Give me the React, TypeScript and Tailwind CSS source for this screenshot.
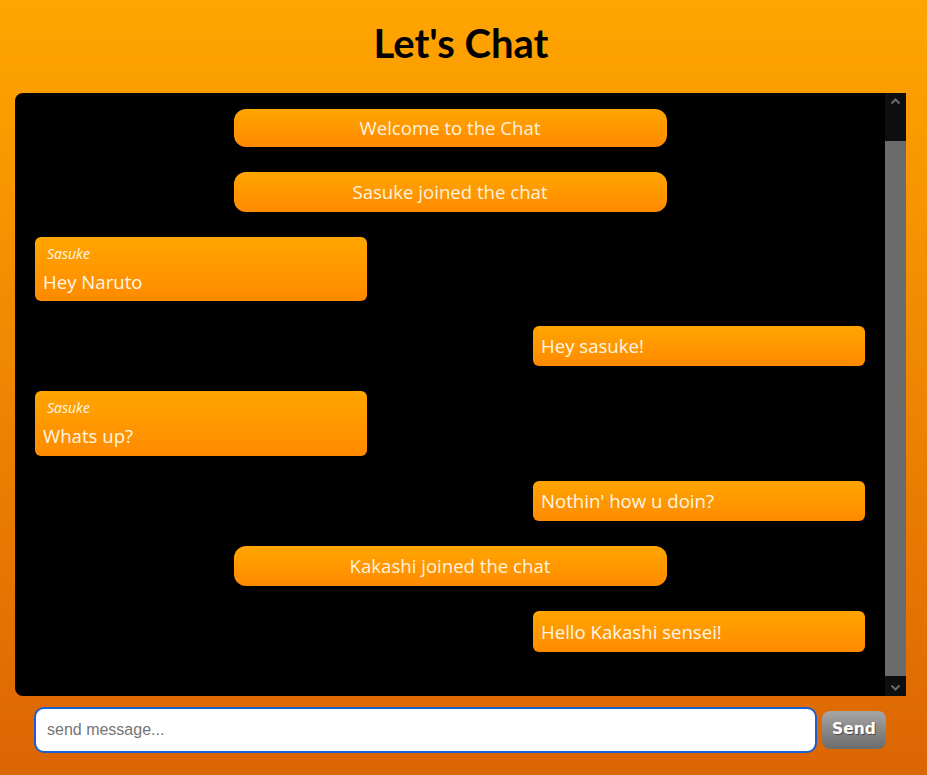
import { useState } from 'react';

type Message = {
    id: number;
    tipo: 'sistema' | 'recebida' | 'enviada';
    autor?: string;
    texto: string;
    altura: string;
};

const mensagens: Message[] = [
    { id: 1, tipo: 'sistema', texto: 'Welcome to the Chat', altura: 'h-[38px]' },
    { id: 2, tipo: 'sistema', texto: 'Sasuke joined the chat', altura: 'h-[40px]' },
    { id: 3, tipo: 'recebida', autor: 'Sasuke', texto: 'Hey Naruto', altura: 'h-[64px]' },
    { id: 4, tipo: 'enviada', texto: 'Hey sasuke!', altura: 'h-[40px]' },
    { id: 5, tipo: 'recebida', autor: 'Sasuke', texto: 'Whats up?', altura: 'h-[65px]' },
    { id: 6, tipo: 'enviada', texto: "Nothin' how u doin?", altura: 'h-[40px]' },
    { id: 7, tipo: 'sistema', texto: 'Kakashi joined the chat', altura: 'h-[40px]' },
    { id: 8, tipo: 'enviada', texto: 'Hello Kakashi sensei!', altura: 'h-[41px]' },
];

function Bolha({ msg }: { msg: Message }) {
    if (msg.tipo === 'sistema') {
        return (
            <div className="flex justify-center">
                <div className={`${msg.altura} w-[433px] rounded-[12px] bg-gradient-to-b from-[#ffa500] to-[#ff8a00] flex items-center justify-center text-[18.6px] text-[#fff2dc]`}>
                    {msg.texto}
                </div>
            </div>
        );
    }

    if (msg.tipo === 'recebida') {
        return (
            <div className="flex justify-start">
                <div className={`${msg.altura} w-[332px] rounded-[6px] bg-gradient-to-b from-[#ffa500] to-[#ff8a00] flex flex-col px-[8px] pt-[8px] text-[#fff6e6]`}>
                    <span className="italic text-[14px] leading-[18px] pl-[4px]">{msg.autor}</span>
                    <span className="text-[18.6px] leading-[26px] mt-[6px]">{msg.texto}</span>
                </div>
            </div>
        );
    }

    return (
        <div className="flex justify-end">
            <div className={`${msg.altura} w-[332px] rounded-[6px] bg-gradient-to-b from-[#ffa500] to-[#ff8a00] flex items-center px-[8px] text-[18.6px] text-[#fff6e6]`}>
                {msg.texto}
            </div>
        </div>
    );
}

function BarraRolagem() {
    return (
        <div className="w-[21px] flex flex-col bg-[#0e0e10]">
            <div className="h-[17px] flex items-center justify-center">
                <svg width="11" height="7" viewBox="0 0 11 7">
                    <path d="M1.5 5.5 L5.5 1.5 L9.5 5.5" stroke="#6a6a6e" strokeWidth="2" fill="none" />
                </svg>
            </div>
            <div className="h-[31px]" />
            <div className="flex-1 bg-[#6b6b6b]" />
            <div className="h-[2px]" />
            <div className="h-[18px] flex items-center justify-center">
                <svg width="11" height="7" viewBox="0 0 11 7">
                    <path d="M1.5 1.5 L5.5 5.5 L9.5 1.5" stroke="#6a6a6e" strokeWidth="2" fill="none" />
                </svg>
            </div>
        </div>
    );
}

function App() {
    const [texto, setTexto] = useState<string>('');

    return (
        <div className="w-full h-[775px] flex flex-col bg-gradient-to-b from-[#ffa500] to-[#dc6503] font-['Open_Sans',sans-serif]">
            <div className="h-[93px] flex items-center justify-center pb-[8px] pr-[5px]">
                <h1 className="text-[40px] font-bold text-black font-['Lato',sans-serif] leading-none">Let's Chat</h1>
            </div>

            <div className="ml-[15px] w-[891px] h-[603px] flex bg-black rounded-l-[8px] overflow-hidden">
                <div className="flex-1 flex flex-col gap-[25px] px-[20px] pt-[16px]">
                    {mensagens.map((msg) => (
                        <Bolha key={msg.id} msg={msg} />
                    ))}
                </div>
                <BarraRolagem />
            </div>

            <form className="flex items-center gap-[5px] pl-[34px] mt-[11px]" onSubmit={(e) => e.preventDefault()}>
                <input
                    value={texto}
                    onChange={(e) => setTexto(e.target.value)}
                    type="text"
                    placeholder="send message..."
                    autoFocus
                    className="w-[783px] h-[46px] bg-white rounded-[10px] border-2 border-[#1a5fd6] outline-none px-[11px] text-[16px] font-['Liberation_Sans',sans-serif] placeholder:text-[#757575]"
                />
                <button
                    type="submit"
                    className="w-[64px] h-[38px] rounded-[8px] bg-gradient-to-b from-[#a6a6a6] to-[#6c6c6c] text-white font-bold text-[15.5px] font-['DejaVu_Sans',sans-serif] [text-shadow:1px_1px_1px_rgba(0,0,0,0.45)]"
                >
                    Send
                </button>
            </form>
        </div>
    );
}

export default App;
